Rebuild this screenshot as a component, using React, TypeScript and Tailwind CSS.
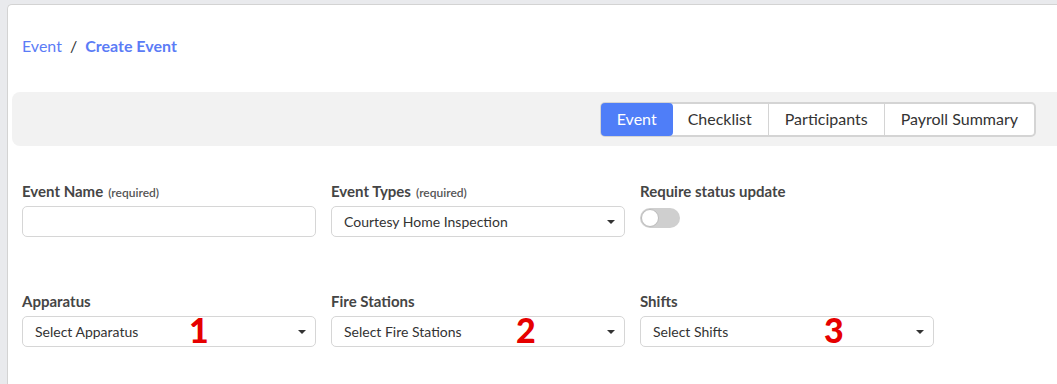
import { ReactNode } from "react";

const tabs = ["Event", "Checklist", "Participants", "Payroll Summary"];

const Caret = () => (
  <svg width="10" height="6" viewBox="0 0 10 6" className="shrink-0">
    <path d="M1 1 L5 5 L9 1 Z" fill="#333" />
  </svg>
);

const Label = ({ text, required }: { text: string; required?: boolean }) => (
  <div className="h-[20px] flex items-baseline pt-[2px] text-[15px] font-bold text-[#454545] leading-none">
    {text}
    {required && <span className="ml-[5px] text-[12px] font-semibold text-[#555]">(required)</span>}
  </div>
);

const Select = ({ value, mark, markLeft }: { value: string; mark?: string; markLeft?: number }) => (
  <div className="relative mt-[4px] h-[31px] w-[294px] flex items-center justify-between border border-[#d6d6d6] rounded-[5px] pl-[12px] pr-[8px] text-[14px] text-[#333]">
    <span>{value}</span>
    <Caret />
    {mark && (
      <span
        className="absolute top-[-6px] text-[34px] font-black text-[#e60000] leading-[38px]"
        style={{ left: markLeft }}
      >
        {mark}
      </span>
    )}
  </div>
);

const Field = ({ children }: { children: ReactNode }) => <div className="w-[294px] flex flex-col">{children}</div>;

export default function App() {
  return (
    <div
      className="h-[384px] w-[1057px] overflow-hidden bg-[#e9eaed] pl-[7px] pt-[4px]"
      style={{ fontFamily: "Lato, 'Open Sans', sans-serif" }}
    >
      <div className="h-full bg-white border-l border-t border-[#d3d3d3] rounded-tl-[5px] pl-[4px]">
        <div className="h-[87px] pl-[10px] pt-[31px] flex items-start text-[16px] leading-[20px]">
          <span className="text-[#5b7cf6]">Event</span>
          <span className="mx-[8px] text-[#333]">/</span>
          <span className="text-[#5b7cf6] font-bold">Create Event</span>
        </div>

        <div className="h-[54px] bg-[#f2f2f2] rounded-l-[8px] flex items-center justify-end pr-[21px]">
          <div className="flex h-[35px] border-2 border-[#d4d4d4] rounded-[5px] bg-white text-[16px] text-[#333]">
            {tabs.map((t, i) => (
              <div
                key={t}
                className={`flex items-center px-[16px] ${
                  i === 0 ? "bg-[#4f7ef8] text-white rounded-[4px] -m-[1px]" : ""
                } ${i > 1 ? "border-l border-[#d4d4d4]" : ""}`}
              >
                {t}
              </div>
            ))}
          </div>
        </div>

        <div className="pl-[10px] pt-[36px] flex gap-[15px]">
          <Field>
            <Label text="Event Name" required />
            <div className="mt-[4px] h-[31px] border border-[#d6d6d6] rounded-[5px]" />
          </Field>
          <Field>
            <Label text="Event Types" required />
            <Select value="Courtesy Home Inspection" />
          </Field>
          <Field>
            <Label text="Require status update" />
            <div className="mt-[6px] w-[40px] h-[20px] rounded-full bg-[#cfcfcf] p-[1px]">
              <div className="w-[18px] h-[18px] rounded-full bg-white border border-[#bbb]" />
            </div>
          </Field>
        </div>

        <div className="pl-[10px] pt-[55px] flex gap-[15px]">
          <Field>
            <Label text="Apparatus" />
            <Select value="Select Apparatus" mark="1" markLeft={166} />
          </Field>
          <Field>
            <Label text="Fire Stations" />
            <Select value="Select Fire Stations" mark="2" markLeft={184} />
          </Field>
          <Field>
            <Label text="Shifts" />
            <Select value="Select Shifts" mark="3" markLeft={183} />
          </Field>
        </div>
      </div>
    </div>
  );
}
